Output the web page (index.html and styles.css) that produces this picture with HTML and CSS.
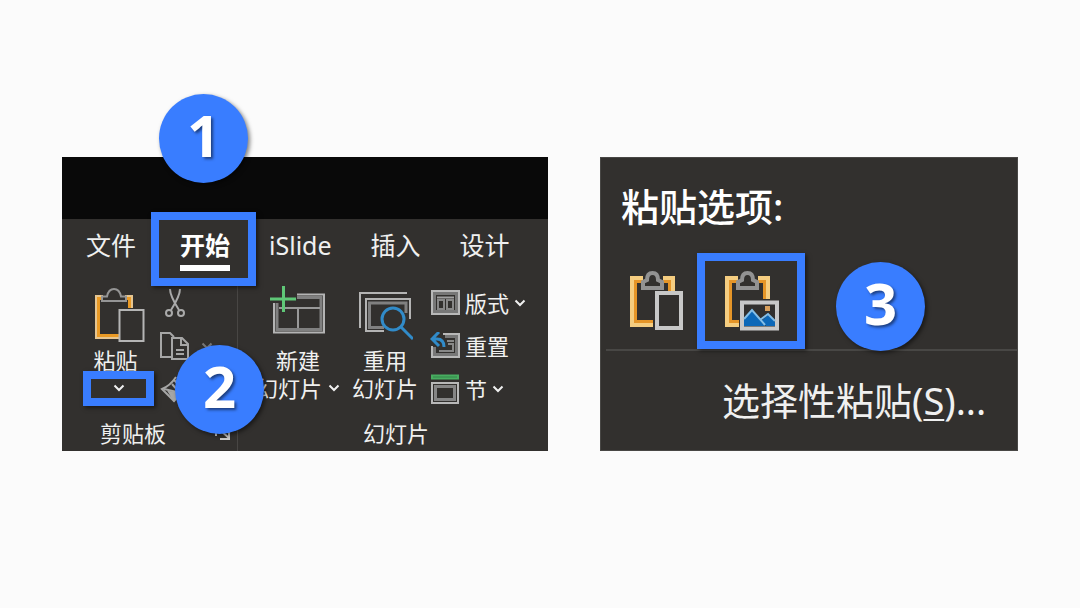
FILE: index.html
```
<!DOCTYPE html>
<html lang="zh-CN">
<head>
  <meta charset="UTF-8" />
  <meta name="viewport" content="width=device-width, initial-scale=1.0"/>
  <title>选择性粘贴</title>
  <link rel="stylesheet" href="styles.css">
</head>
<body>

<main class="steps">

  <!-- Ribbon -->
  <section class="panel ribbon">
    <div class="titlebar"></div>

    <nav class="tabs">
      <a href="#">文件</a>
      <a href="#" class="active">开始<span class="frame tab-frame"></span></a>
      <a href="#">iSlide</a>
      <a href="#">插入</a>
      <a href="#">设计</a>
    </nav>

    <div class="groups">
      <div class="group clipboard">
        <div class="tools">
          <div class="paste">
            <button class="big">
              <svg width="52" height="56" viewBox="0 0 52 56" fill="none">
                <path d="M10 9H3V51H26M32 9H39V21" stroke="#e6c590" stroke-width="2"/>
                <path d="M10 11.5H5.5V48.5H26M32 11.5H36.5V21" stroke="#ea9a25" stroke-width="3"/>
                <path d="M9 14V9.500H14C15 4.500 17 2 21 2S27 4.500 28 9.500H33V14Z" fill="#32302e" stroke="#959595" stroke-width="2"/>
                <rect x="26.500" y="23" width="24" height="31" fill="#32302e" stroke="#b5b5b5" stroke-width="2"/>
              </svg>
              <span>粘贴</span>
            </button>
            <button class="drop" aria-label="粘贴选项">
              <svg class="chevron" width="12" height="8" viewBox="0 0 12 8"><path d="M1.500 1.500L6 6L10.500 1.500"/></svg>
              <span class="frame drop-frame"></span>
            </button>
          </div>
          <div class="small">
            <button aria-label="剪切">
              <svg width="30" height="28" viewBox="0 0 30 28" fill="none" stroke="#aaa" stroke-width="2">
                <path d="M10 0C10 5 12 10 19 21M20 0C20 5 18 10 11 21"/>
                <circle cx="9" cy="24" r="3"/>
                <circle cx="21" cy="24" r="3"/>
              </svg>
            </button>
            <button aria-label="复制">
              <svg width="30" height="28" viewBox="0 0 30 28" fill="none" stroke="#a6a6a6" stroke-width="2">
                <path d="M12 25H1V1H10L14 5"/>
                <path d="M12 6H22L28 12V27H12ZM21 6V13H28M16 18H24M16 22H24"/>
              </svg>
              <svg class="chevron dim" width="12" height="8" viewBox="0 0 12 8"><path d="M1.500 1.500L6 6L10.500 1.500"/></svg>
            </button>
            <button aria-label="格式刷">
              <svg width="30" height="28" viewBox="0 0 30 28" fill="none" stroke="#a6a6a6" stroke-width="2">
                <path d="M16 2C12 8 7 12 2 14L14 26L24 15L14 5"/>
                <path d="M4 14L17 17M12 9L20 18"/>
                <path d="M9 17L18 18L14 25Z" fill="#a6a6a6"/>
              </svg>
            </button>
          </div>
        </div>
        <div class="caption">
          <span>剪贴板</span>
          <button class="launcher" aria-label="剪贴板窗格">
            <svg width="16" height="14" viewBox="0 0 16 14" fill="none" stroke="#ccc" stroke-width="2">
              <path d="M1 10V1H10M5 4L14 12M14 4V13H5"/>
            </svg>
          </button>
        </div>
      </div>

      <div class="group slides">
        <div class="tools">
          <button class="big new-slide">
            <svg width="56" height="56" viewBox="0 0 56 56" fill="none">
              <path d="M27 8.500H54V46.500H4V17" stroke="#b4b4b4" stroke-width="2"/>
              <path d="M27 11.500H51V43.500H7V17" stroke="#808080" stroke-width="3"/>
              <path d="M9 22H50M28 22V42" stroke="#999" stroke-width="2"/>
              <path d="M13.500 0V26M0 13H26" stroke="#5fc777" stroke-width="3"/>
            </svg>
            <span>新建</span>
            <span class="with-chevron">幻灯片
              <svg class="chevron" width="12" height="8" viewBox="0 0 12 8"><path d="M1.500 1.500L6 6L10.500 1.500"/></svg>
            </span>
          </button>
          <button class="big">
            <svg width="56" height="56" viewBox="0 0 56 56" fill="none">
              <path d="M3 41V6H50" stroke="#b4b4b4" stroke-width="2"/>
              <path d="M27 44H9V12H53V32" stroke="#b4b4b4" stroke-width="2"/>
              <path d="M27 40.500H12.500V16H49V26" stroke="#808080" stroke-width="3"/>
              <circle cx="36" cy="32" r="11" fill="#32302e" stroke="#318bc9" stroke-width="3"/>
              <path d="M44 40L56 52" stroke="#318bc9" stroke-width="3"/>
            </svg>
            <span>重用</span>
            <span>幻灯片</span>
          </button>
          <div class="small">
            <button>
              <svg width="30" height="28" viewBox="0 0 30 28" fill="none">
                <rect x="2" y="2" width="27" height="23" stroke="#b8b8b8" stroke-width="2"/>
                <rect x="4.500" y="4.500" width="22" height="18" stroke="#777" stroke-width="3"/>
                <path d="M7 8.500H24" stroke="#a0a0a0" stroke-width="2"/>
                <path d="M8 11H14V20H8ZM17 11H23V20H17Z" stroke="#888" stroke-width="2"/>
              </svg>
              <span>版式</span>
              <svg class="chevron" width="12" height="8" viewBox="0 0 12 8"><path d="M1.500 1.500L6 6L10.500 1.500"/></svg>
            </button>
            <button>
              <svg width="30" height="28" viewBox="0 0 30 28" fill="none">
                <path d="M13 2H29V25H2V14" stroke="#b8b8b8" stroke-width="2"/>
                <path d="M15 4.500H26.500V22.500H4.500V15" stroke="#777" stroke-width="3"/>
                <path d="M17 9H24M18 12H23V19H9" stroke="#888" stroke-width="2"/>
                <path d="M9 0L2 7L9 14M2 7H7C12 7 14 10 14 15" stroke="#318bc9" stroke-width="3"/>
              </svg>
              <span>重置</span>
            </button>
            <button>
              <svg width="30" height="30" viewBox="0 0 30 30" fill="none">
                <path d="M1 3H29" stroke="#48ad60" stroke-width="5"/>
                <path d="M3 3H27" stroke="#338348" stroke-width="1"/>
                <rect x="2" y="9" width="26" height="20" stroke="#b8b8b8" stroke-width="2"/>
                <rect x="5.500" y="12.500" width="19" height="13" stroke="#858585" stroke-width="3"/>
              </svg>
              <span>节</span>
              <svg class="chevron" width="12" height="8" viewBox="0 0 12 8"><path d="M1.500 1.500L6 6L10.500 1.500"/></svg>
            </button>
          </div>
        </div>
        <div class="caption"><span>幻灯片</span></div>
      </div>
    </div>

    <span class="badge badge-1">1</span>
    <span class="badge badge-2">2</span>
  </section>

  <!-- Paste menu -->
  <section class="panel paste-menu">
    <h2>粘贴选项:</h2>
    <div class="options">
      <button class="option" aria-label="使用目标主题">
        <svg width="54" height="60" viewBox="0 0 54 60" fill="none">
          <path d="M13 7H2V54H23M33 7H43V20" stroke="#f5cd80" stroke-width="4"/>
          <path d="M13 10.500H5.500V50.500H23M33 10.500H39.500V20" stroke="#e59528" stroke-width="3"/>
          <path d="M13 17V11L17 9C17 4 19 2 22.500 2S28 4 28 9L32 11V17Z" fill="#32302e" stroke="#929292" stroke-width="4"/>
          <rect x="27" y="22" width="24" height="35" fill="#32302e" stroke="#c8c8c8" stroke-width="4"/>
        </svg>
      </button>
      <button class="option picked" aria-label="图片">
        <svg width="54" height="60" viewBox="0 0 54 60" fill="none">
          <path d="M13 7H2V54H14M33 7H43V28" stroke="#f5cd80" stroke-width="4"/>
          <path d="M13 10.500H5.500V50.500H14M33 10.500H39.500V28" stroke="#e59528" stroke-width="3"/>
          <path d="M13 17V11L17 9C17 4 19 2 22.500 2S28 4 28 9L32 11V17Z" fill="#32302e" stroke="#929292" stroke-width="4"/>
          <rect x="17" y="31.500" width="35" height="26" fill="#32302e" stroke="#c8c8c8" stroke-width="4"/>
          <path d="M19 49L27 39L40 55H19Z" fill="#0c68b8"/>
          <path d="M36 50L43 44L50 51V55H41Z" fill="#0c68b8"/>
          <path d="M19 48L27 39L40 54M35 49L43 43L50 50" stroke="#84bfe8" stroke-width="2"/>
          <rect x="40" y="35" width="5" height="5" fill="#d9a05c"/>
        </svg>
      </button>
    </div>
    <hr>
    <button class="special">选择性粘贴(<u>S</u>)...</button>

    <span class="badge badge-3">3</span>
  </section>

</main>

</body>
</html>
```
FILE: styles.css
```
* {
  box-sizing: border-box;
}
body {
  margin: 0;
  background: #fbfbfb;
  color: #f0f0f0;
  font-family: "Noto Sans", "Noto Sans CJK SC", sans-serif;
}
button {
  background: none;
  border: 0;
  padding: 0;
  margin: 0;
  color: inherit;
  font: inherit;
  text-align: left;
  cursor: pointer;
}
svg {
  display: block;
  flex: none;
}

.steps {
  min-height: 100vh;
  padding: 0 62px;
  display: grid;
  grid-template-columns: 486fr 418fr;
  gap: 52px;
  align-items: center;
}
.panel {
  position: relative;
  background: #32302e;
}

/* Blue step markers */
.badge {
  position: absolute;
  width: 89px;
  height: 89px;
  border-radius: 50%;
  background: #397dff;
  color: #fff;
  font-size: 58px;
  font-weight: bold;
  line-height: 82px;
  text-align: center;
  text-shadow: 2px 2px 3px rgba(0, 0, 0, 0.5);
  box-shadow: 2px 2px 4px rgba(0, 0, 0, 0.5);
}
.badge-1 {
  left: 97px;
  top: -63px;
}
.badge-2 {
  left: 113px;
  top: 188px;
}
.badge-3 {
  left: 235px;
  top: 104px;
}
.frame {
  position: absolute;
  border: 8px solid #397dff;
  box-shadow: 2px 2px 4px rgba(0, 0, 0, 0.5);
}

/* Ribbon */
.titlebar {
  height: 62px;
  background: #090909;
}
.tabs {
  display: flex;
  gap: 39px;
  height: 66px;
  padding: 8px 24px 0;
  font-size: 25px;
  line-height: 36px;
  white-space: nowrap;
}
.tabs a {
  color: inherit;
  text-decoration: none;
}
.tabs .active {
  position: relative;
  height: 44px;
  margin-left: 5px;
  border-bottom: 6px solid #fff;
  color: #fff;
  font-weight: bold;
}
.tab-frame {
  inset: -15px -26px -21px -29px;
}
.groups {
  display: flex;
  font-size: 22px;
  line-height: 28px;
  white-space: nowrap;
}
.group {
  padding-bottom: 4px;
}
.clipboard {
  width: 176px;
  border-right: 1px solid #484644;
}
.tools {
  display: flex;
  height: 118px;
}
.clipboard .tools {
  gap: 6px;
  padding-left: 21px;
}
.slides {
  flex: 1;
}
.slides .tools {
  gap: 12px;
  padding-left: 18px;
}
.big {
  display: flex;
  flex-direction: column;
  align-items: center;
}
.big > svg {
  margin: 2px 0 3px;
}
.new-slide > svg {
  margin: 1px 0 4px;
}
.paste {
  width: 71px;
}
.paste .big {
  width: 100%;
}
.paste .big span {
  padding-right: 6px;
}
.drop {
  position: relative;
  display: flex;
  align-items: center;
  justify-content: center;
  width: 100%;
  height: 28px;
}
.drop-frame {
  inset: -3px 0 -4px;
}
.with-chevron {
  display: flex;
  align-items: center;
  gap: 6px;
}
.chevron {
  fill: none;
  stroke: #f0f0f0;
  stroke-width: 2;
}
.dim {
  stroke: #777;
}
.small {
  display: flex;
  flex-direction: column;
  gap: 15px;
  padding-top: 4px;
}
.small button {
  display: flex;
  align-items: center;
  gap: 5px;
  height: 28px;
}
.clipboard .small button {
  gap: 11px;
}
.caption {
  margin-top: 16px;
  text-align: center;
}
.clipboard .caption {
  display: flex;
  justify-content: space-between;
  align-items: center;
  padding: 0 6px 0 38px;
}
.slides .caption {
  padding-left: 6px;
}

/* Paste menu */
.paste-menu {
  padding: 24px 0;
  border: 1px solid #484745;
}
.paste-menu h2 {
  margin: 0 0 23px 20px;
  color: #fff;
  font-size: 38px;
  font-weight: 500;
  line-height: 48px;
}
.options {
  display: flex;
  align-items: center;
  padding-left: 29px;
}
.option {
  width: 67px;
}
.picked {
  width: 108px;
  height: 96px;
  padding-left: 20px;
  border: 8px solid #397dff;
  box-shadow: 2px 2px 4px rgba(0, 0, 0, 0.5);
}
hr {
  height: 2px;
  margin: 0 0 25px 5px;
  border: 0;
  background: #484745;
}
.special {
  display: block;
  margin-bottom: 2px;
  padding-left: 121px;
  font-size: 38px;
  line-height: 48px;
  white-space: nowrap;
}
.special u {
  text-decoration-thickness: 2px;
  text-underline-offset: 4px;
}
```
